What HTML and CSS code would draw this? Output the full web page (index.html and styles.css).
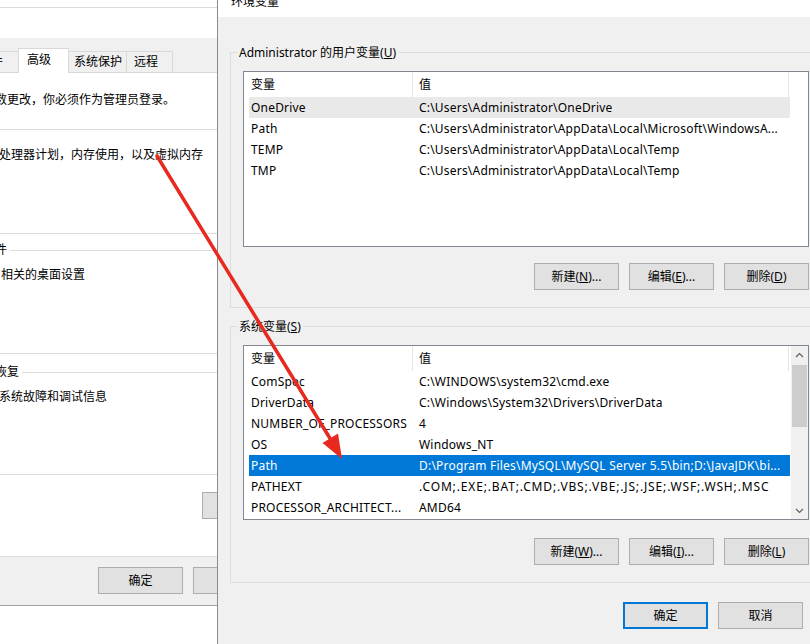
FILE: index.html
```html
<!DOCTYPE html>
<html lang="zh-CN">
<head>
<meta charset="utf-8">
<title>环境变量</title>
<link rel="stylesheet" href="styles.css">
</head>
<body>
<div class="screen">
  <div class="sysprop">
    <div class="sp-top"></div>
    <div class="sp-top2"></div>
    <div class="tabstrip">
      <div class="tab tab-cut"><span>件</span></div>
      <div class="tab tab-active">高级</div>
      <div class="tab tab-a">系统保护</div>
      <div class="tab tab-b">远程</div>
    </div>
    <div class="page">
      <p class="ptext t1">数更改，你必须作为管理员登录。</p>
      <div class="gline g1top"></div>
      <p class="ptext t2">处理器计划，内存使用，以及虚拟内存</p>
      <div class="gline g1bot"></div>
      <div class="ghead g2top"><span class="glabel">件</span><span class="gl"></span></div>
      <p class="ptext t3">相关的桌面设置</p>
      <div class="gline g2bot"></div>
      <div class="ghead g3top"><span class="glabel">恢复</span><span class="gl"></span></div>
      <p class="ptext t4">系统故障和调试信息</p>
      <div class="gline g3bot"></div>
      <div class="envrow"><div class="btn btn-env">环境变量(N)...</div></div>
    </div>
    <div class="sp-foot">
      <div class="btn">确定</div>
      <div class="btn">取消</div>
    </div>
    <div class="sp-below"></div>
  </div>

  <div class="envwin">
    <div class="titlebar"><span class="title">环境变量</span></div>

    <fieldset class="gbox gbox-user">
      <legend>Administrator 的用户变量(<u>U</u>)</legend>
      <div class="list list-user">
        <div class="lhead"><div class="h1">变量</div><div class="h2">值</div></div>
        <div class="row sel-gray"><div class="c1">OneDrive</div><div class="c2">C:\Users\Administrator\OneDrive</div></div>
        <div class="row"><div class="c1">Path</div><div class="c2">C:\Users\Administrator\AppData\Local\Microsoft\WindowsA...</div></div>
        <div class="row"><div class="c1">TEMP</div><div class="c2">C:\Users\Administrator\AppData\Local\Temp</div></div>
        <div class="row"><div class="c1">TMP</div><div class="c2">C:\Users\Administrator\AppData\Local\Temp</div></div>
      </div>
      <div class="btnrow">
        <div class="btn">新建(<u>N</u>)...</div>
        <div class="btn">编辑(<u>E</u>)...</div>
        <div class="btn">删除(<u>D</u>)</div>
      </div>
    </fieldset>

    <fieldset class="gbox gbox-sys">
      <legend>系统变量(<u>S</u>)</legend>
      <div class="list list-sys">
        <div class="lbody">
          <div class="lhead"><div class="h1">变量</div><div class="h2">值</div></div>
          <div class="row"><div class="c1">ComSpec</div><div class="c2">C:\WINDOWS\system32\cmd.exe</div></div>
          <div class="row"><div class="c1">DriverData</div><div class="c2">C:\Windows\System32\Drivers\DriverData</div></div>
          <div class="row"><div class="c1">NUMBER_OF_PROCESSORS</div><div class="c2">4</div></div>
          <div class="row"><div class="c1">OS</div><div class="c2">Windows_NT</div></div>
          <div class="row sel-blue"><div class="c1">Path</div><div class="c2">D:\Program Files\MySQL\MySQL Server 5.5\bin;D:\JavaJDK\bi...</div></div>
          <div class="row"><div class="c1">PATHEXT</div><div class="c2 punct">.COM;.EXE;.BAT;.CMD;.VBS;.VBE;.JS;.JSE;.WSF;.WSH;.MSC</div></div>
          <div class="row"><div class="c1">PROCESSOR_ARCHITECT...</div><div class="c2">AMD64</div></div>
        </div>
        <div class="vscroll">
          <div class="sb-btn"><svg width="9" height="6" viewBox="0 0 9 6"><path d="M1 5 L4.5 1.5 L8 5" fill="none" stroke="#606060" stroke-width="1.2"/></svg></div>
          <div class="sb-track"><div class="sb-thumb"></div></div>
          <div class="sb-btn"><svg width="9" height="6" viewBox="0 0 9 6"><path d="M1 1 L4.5 4.5 L8 1" fill="none" stroke="#606060" stroke-width="1.2"/></svg></div>
        </div>
      </div>
      <div class="btnrow">
        <div class="btn">新建(<u>W</u>)...</div>
        <div class="btn">编辑(<u>I</u>)...</div>
        <div class="btn">删除(<u>L</u>)</div>
      </div>
    </fieldset>

    <div class="okrow">
      <div class="btn btn-default">确定</div>
      <div class="btn">取消</div>
    </div>
  </div>

  <svg class="arrow" width="810" height="644" viewBox="0 0 810 644">
    <line x1="157" y1="156" x2="331" y2="440" stroke="#e8291f" stroke-width="3.5" stroke-linecap="round"/>
    <polygon points="342,459 338,433.5 322.5,443" fill="#e8291f"/>
  </svg>
</div>
</body>
</html>
```
FILE: styles.css
```css
* { box-sizing: border-box; }
html, body { margin: 0; padding: 0; }
body {
  width: 810px;
  height: 644px;
  overflow: hidden;
  background: #fff;
  font-family: "Noto Sans", "Noto Sans CJK SC", sans-serif;
  font-size: 12px;
  color: #000;
}
.screen {
  position: relative;
  display: flex;
  width: 810px;
  height: 644px;
  overflow: hidden;
}

/* ---------- left: system properties (partly hidden) ---------- */
.sysprop {
  width: 217px;
  flex: none;
  display: flex;
  flex-direction: column;
  overflow: hidden;
  background: #fff;
  white-space: nowrap;
}
.sp-top { height: 8px; flex: none; border-bottom: 1px solid #dadada; }
.sp-top2 { height: 30px; flex: none; }
.tabstrip {
  height: 34px;
  flex: none;
  background: #f0f0f0;
  display: flex;
  align-items: flex-end;
}
.tab {
  flex: none;
  height: 21px;
  border: 1px solid #d9d9d9;
  border-bottom: none;
  background: #f0f0f0;
  line-height: 20px;
  overflow: hidden;
}
.tab-cut { width: 18px; border-left: none; border-right: none; }
.tab-cut span { display: inline-block; margin-left: -9px; }
.tab-active {
  width: 51px;
  height: 25px;
  background: #fff;
  position: relative;
  z-index: 1;
  margin-bottom: -1px;
  padding-left: 8px;
  line-height: 22px;
}
.tab-a { width: 58px; border-left: none; padding-left: 5px; }
.tab-b { width: 46px; border-left: none; padding-left: 7px; }

.page {
  height: 484px;
  flex: none;
  border-top: 1px solid #d9d9d9;
  background: #fff;
}
.ptext { margin: 0; height: 20px; line-height: 20px; }
.t1 { margin-top: 17px; margin-left: -5px; }
.t2 { margin-top: 15px; margin-left: -1px; }
.t3 { margin-top: 7px; margin-left: 1px; }
.t4 { margin-top: 7px; margin-left: -1px; }
.gline { height: 1px; background: #dcdcdc; }
.g1top { margin-top: 19px; }
.g1bot { margin-top: 68px; }
.g2bot { margin-top: 68px; }
.g3bot { margin-top: 67px; }
.ghead {
  height: 16px;
  display: flex;
  align-items: center;
  line-height: 16px;
}
.g2top { margin-top: 8px; }
.g3top { margin-top: 10px; }
.glabel { margin-left: -5px; padding-right: 3px; }
.gl { flex: 1; height: 1px; background: #dcdcdc; }
.envrow { margin-top: 17px; padding-left: 202px; display: flex; }

.sp-foot {
  height: 50px;
  flex: none;
  background: #f0f0f0;
  border-top: 1px solid #dcdcdc;
  border-bottom: 1px solid #a0a0a0;
  padding: 10px 0 0 98px;
  display: flex;
  align-items: flex-start;
  gap: 10px;
}
.sp-below { flex: 1; background: #fff; }

/* ---------- buttons ---------- */
.btn {
  flex: none;
  width: 85px;
  height: 27px;
  background: #e1e1e1;
  border: 1px solid #adadad;
  text-align: center;
  line-height: 25px;
  white-space: nowrap;
}
.btn u { text-decoration-thickness: 1px; text-underline-offset: 1px; }
.btn-default { border: 2px solid #0078d7; line-height: 23px; }
.btn-env { width: 130px; }

/* ---------- right: environment variables dialog ---------- */
.envwin {
  flex: none;
  width: 593px;
  background: #f0f0f0;
  border-left: 1px solid #8a8a8a;
  overflow: hidden;
  white-space: nowrap;
}
.titlebar {
  height: 17px;
  background: #fff;
  overflow: hidden;
  padding-left: 13px;
}
.title { display: block; line-height: 16px; margin-top: -6px; }

.gbox {
  margin: 0 0 0 12px;
  width: 600px;
  min-width: 0;
  border: 1px solid #dcdcdc;
  padding: 11px 0 17px 6px;
}
.gbox legend {
  padding: 0 2px;
  line-height: 16px;
  font-size: 12px;
  position: relative;
  top: 1px;
}
.gbox-user { margin-top: 27px; }
.gbox-sys { margin-top: 10px; }

.list {
  margin-left: 6px;
  width: 566px;
  background: #fff;
  border: 1px solid #828790;
  overflow: hidden;
  letter-spacing: 0.2px;
}
.list-user { height: 176px; }
.list-sys { height: 175px; display: flex; }
.lbody { flex: 1; min-width: 0; overflow: hidden; }

.lhead { height: 25px; display: flex; line-height: 25px; letter-spacing: 0; }
.lhead .h1 { width: 169px; padding-left: 7px; border-right: 1px solid #e5e5e5; }
.lhead .h2 { width: 376px; padding-left: 6px; border-right: 1px solid #e5e5e5; }

.row {
  margin-left: 5px;
  width: 541px;
  height: 21px;
  line-height: 21px;
  display: flex;
}
.row .c1 { width: 163px; flex: none; padding-left: 2px; overflow: hidden; }
.row .c2 { flex: 1; padding-left: 7px; overflow: hidden; }
.row .punct { letter-spacing: 0.85px; }
.sel-gray { background: #e9e9e9; }
.sel-blue { background: #0078d7; color: #fff; }

.vscroll {
  width: 17px;
  flex: none;
  background: #f0f0f0;
  display: flex;
  flex-direction: column;
}
.sb-btn {
  height: 17px;
  flex: none;
  display: flex;
  align-items: center;
  justify-content: center;
}
.sb-track { flex: 1; padding: 2px 1px 0 1px; }
.sb-thumb { height: 62px; background: #cdcdcd; }

.btnrow {
  margin-left: 6px;
  width: 566px;
  display: flex;
  justify-content: flex-end;
  gap: 10px;
}
.gbox-user .btnrow { margin-top: 16px; }
.gbox-sys .btnrow { margin-top: 18px; }

.okrow {
  margin-top: 19px;
  padding-left: 405px;
  display: flex;
  gap: 10px;
}

/* ---------- annotation arrow ---------- */
.arrow {
  position: absolute;
  left: 0;
  top: 0;
  pointer-events: none;
}
```
